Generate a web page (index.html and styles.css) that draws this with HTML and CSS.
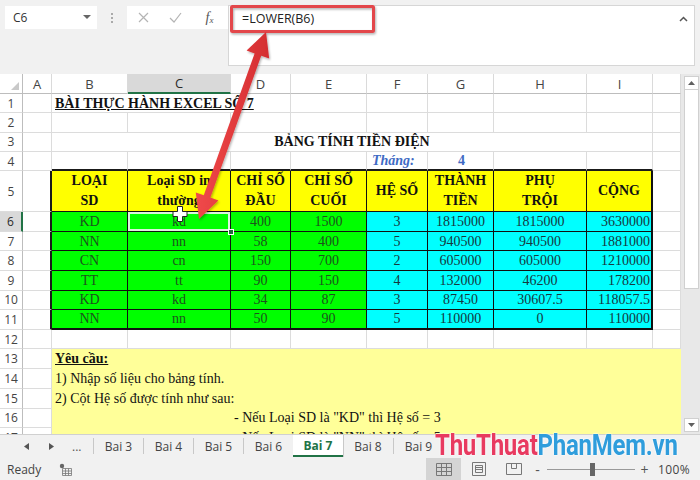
FILE: index.html
```html
<!DOCTYPE html>
<html lang="vi">
<head>
  <meta charset="UTF-8">
  <meta name="viewport" content="width=device-width, initial-scale=1.0">
  <title>Excel - LOWER</title>
  <link rel="stylesheet" href="styles.css">
</head>
<body>

<div class="excel">
  <!-- thanh công thức -->
  <div class="formula-area">
    <div class="name-box">
      <span>C6</span>
      <svg class="drop" width="8" height="5" viewBox="0 0 8 5"><path d="M0 0h8L4 4z" fill="#666"/></svg>
    </div>
    <div class="grip"><i></i><i></i><i></i></div>
    <div class="fx-buttons">
      <span class="fx-btn">
        <svg width="11" height="11" viewBox="0 0 11 11"><path d="M1 1l9 9M10 1l-9 9" stroke="#b4b4b4" stroke-width="1.2"/></svg>
      </span>
      <span class="fx-btn">
        <svg width="13" height="11" viewBox="0 0 13 11"><path d="M1 6l4 4 7-9" fill="none" stroke="#b4b4b4" stroke-width="1.2"/></svg>
      </span>
      <span class="fx-btn fx"><i>f</i><small>x</small></span>
    </div>
    <div class="formula-input">
      <span class="formula-text">=LOWER(B6)</span>
      <svg class="collapse" width="9" height="6" viewBox="0 0 9 6"><path d="M1 5l3.5-3.5L8 5" fill="none" stroke="#555" stroke-width="1.5"/></svg>
    </div>
  </div>

  <!-- vùng bảng tính -->
  <div class="sheet-area">
    <div class="grid-wrap">
      <table class="grid">
        <colgroup>
          <col style="width:23px"><col style="width:29px"><col style="width:76px"><col style="width:103px">
          <col style="width:60px"><col style="width:76px"><col style="width:61px"><col style="width:66px">
          <col style="width:93px"><col style="width:66px"><col style="width:28px">
        </colgroup>
        <thead>
          <tr>
            <th class="corner"><span class="tri"></span></th>
            <th>A</th><th>B</th><th class="on">C</th><th>D</th><th>E</th>
            <th>F</th><th>G</th><th>H</th><th>I</th><th></th>
          </tr>
        </thead>
        <tbody>
          <tr class="r">
            <td class="rh">1</td><td></td>
            <td colspan="3" class="title">BÀI THỰC HÀNH EXCEL SỐ 7</td>
            <td></td><td></td><td></td><td></td><td></td><td></td>
          </tr>
          <tr class="r">
            <td class="rh">2</td><td></td><td></td><td></td><td></td><td></td><td></td><td></td><td></td><td></td><td></td>
          </tr>
          <tr class="r">
            <td class="rh">3</td><td></td>
            <td colspan="8" class="title2">BẢNG TÍNH TIỀN ĐIỆN</td>
            <td></td>
          </tr>
          <tr class="r">
            <td class="rh">4</td><td></td>
            <td class="top"></td><td class="top"></td><td class="top"></td><td class="top"></td>
            <td class="top month">Tháng:</td><td class="top month num">4</td>
            <td class="top"></td><td class="top"></td><td></td>
          </tr>
          <tr class="r5">
            <td class="rh">5</td><td class="left"></td>
            <td class="hd">LOẠI<br>SD</td>
            <td class="hd">Loại SD in<br>thường</td>
            <td class="hd">CHỈ SỐ<br>ĐẦU</td>
            <td class="hd">CHỈ SỐ<br>CUỐI</td>
            <td class="hd">HỆ SỐ</td>
            <td class="hd">THÀNH<br>TIỀN</td>
            <td class="hd">PHỤ<br>TRỘI</td>
            <td class="hd end">CỘNG</td>
            <td></td>
          </tr>
          <tr class="d">
            <td class="rh on">6</td><td class="left"></td>
            <td class="g">KD</td><td class="g sel">kd<span class="handle"></span></td><td class="g">400</td><td class="g">1500</td>
            <td class="c">3</td><td class="c">1815000</td><td class="c">1815000</td><td class="c end">3630000</td><td></td>
          </tr>
          <tr class="d">
            <td class="rh">7</td><td class="left"></td>
            <td class="g">NN</td><td class="g">nn</td><td class="g">58</td><td class="g">400</td>
            <td class="c">5</td><td class="c">940500</td><td class="c">940500</td><td class="c end">1881000</td><td></td>
          </tr>
          <tr class="d">
            <td class="rh">8</td><td class="left"></td>
            <td class="g">CN</td><td class="g">cn</td><td class="g">150</td><td class="g">700</td>
            <td class="c">2</td><td class="c">605000</td><td class="c">605000</td><td class="c end">1210000</td><td></td>
          </tr>
          <tr class="d">
            <td class="rh">9</td><td class="left"></td>
            <td class="g">TT</td><td class="g">tt</td><td class="g">90</td><td class="g">150</td>
            <td class="c">4</td><td class="c">132000</td><td class="c">46200</td><td class="c end">178200</td><td></td>
          </tr>
          <tr class="d">
            <td class="rh">10</td><td class="left"></td>
            <td class="g">KD</td><td class="g">kd</td><td class="g">34</td><td class="g">87</td>
            <td class="c">3</td><td class="c">87450</td><td class="c">30607.5</td><td class="c end">118057.5</td><td></td>
          </tr>
          <tr class="d last">
            <td class="rh">11</td><td class="left"></td>
            <td class="g">NN</td><td class="g">nn</td><td class="g">50</td><td class="g">90</td>
            <td class="c">5</td><td class="c">110000</td><td class="c">0</td><td class="c end">110000</td><td></td>
          </tr>
          <tr class="n">
            <td class="rh">12</td><td></td><td></td><td></td><td></td><td></td><td></td><td></td><td></td><td></td><td></td>
          </tr>
          <tr class="n">
            <td class="rh">13</td><td></td>
            <td colspan="9" class="note"><b>Yêu cầu:</b></td>
          </tr>
          <tr class="n">
            <td class="rh">14</td><td></td>
            <td colspan="9" class="note">1) Nhập số liệu cho bảng tính.</td>
          </tr>
          <tr class="n">
            <td class="rh">15</td><td></td>
            <td colspan="9" class="note">2) Cột Hệ số được tính như sau:</td>
          </tr>
          <tr class="n">
            <td class="rh">16</td><td></td>
            <td class="note"></td><td class="note"></td>
            <td colspan="7" class="note">- Nếu Loại SD là "KD" thì Hệ số = 3</td>
          </tr>
          <tr class="n">
            <td class="rh">17</td><td></td>
            <td class="note"></td><td class="note"></td>
            <td colspan="7" class="note">- Nếu Loại SD là "NN" thì Hệ số = 5</td>
          </tr>
        </tbody>
      </table>
    </div>
    <div class="vscroll">
      <div class="sb-btn"><svg width="7" height="4" viewBox="0 0 7 4"><path d="M0 4L3.5 0 7 4z" fill="#606060"/></svg></div>
      <div class="sb-thumb"></div>
      <div class="sb-track"></div>
      <div class="sb-btn"><svg width="7" height="4" viewBox="0 0 7 4"><path d="M0 0h7L3.5 4z" fill="#606060"/></svg></div>
    </div>
  </div>

  <!-- thanh sheet -->
  <div class="tab-bar">
    <div class="tab-nav">
      <svg width="5" height="7" viewBox="0 0 5 7"><path d="M5 0v7L0 3.5z" fill="#555"/></svg>
      <svg width="5" height="7" viewBox="0 0 5 7"><path d="M0 0v7L5 3.5z" fill="#555"/></svg>
      <span class="more">...</span>
    </div>
    <div class="tab">Bai 3</div>
    <div class="tab">Bai 4</div>
    <div class="tab">Bai 5</div>
    <div class="tab">Bai 6</div>
    <div class="tab active">Bai 7</div>
    <div class="tab">Bai 8</div>
    <div class="tab">Bai 9</div>
  </div>

  <!-- thanh trạng thái -->
  <div class="status-bar">
    <span class="ready">Ready</span>
    <svg class="macro" width="13" height="13" viewBox="0 0 13 13">
      <circle cx="3" cy="3" r="2.2" fill="#666"/>
      <path d="M3.5 5.5h9v7h-9zM3.5 8h9M3.5 10.5h9M6.5 5.5v7M9.5 5.5v7" fill="none" stroke="#777" stroke-width="0.8"/>
    </svg>
    <div class="spacer"></div>
    <div class="view on">
      <svg width="16" height="13" viewBox="0 0 16 13"><path d="M0.5 0.5h15v12h-15zM0.5 4.5h15M0.5 8.5h15M5.5 0.5v12M10.5 0.5v12" fill="none" stroke="#777"/></svg>
    </div>
    <div class="view">
      <svg width="14" height="14" viewBox="0 0 14 14"><path d="M0.5 0.5h13v13h-13zM3.5 3.5h7v7h-7zM3.5 5.5h7M3.5 7.5h7" fill="none" stroke="#777"/></svg>
    </div>
    <div class="view">
      <svg width="16" height="12" viewBox="0 0 16 12"><path d="M0.5 0.5h15v11h-15zM5.5 0.5v5h5v-5" fill="none" stroke="#777"/></svg>
    </div>
    <div class="zoom">
      <span class="zm">-</span>
      <span class="slider"><i></i></span>
      <span class="zm">+</span>
      <span class="pct">100%</span>
    </div>
  </div>

  <!-- chú thích màu đỏ -->
  <svg class="annot" width="700" height="480" viewBox="0 0 700 480">
    <defs>
      <filter id="sh" x="-20%" y="-20%" width="140%" height="140%">
        <feDropShadow dx="1" dy="1.5" stdDeviation="1.2" flood-color="#000" flood-opacity="0.3"/>
      </filter>
      <linearGradient id="red" x1="0" y1="0" x2="1" y2="0">
        <stop offset="0" stop-color="#f0494a"/>
        <stop offset="1" stop-color="#d42e31"/>
      </linearGradient>
    </defs>
    <rect x="231.5" y="6.5" width="142" height="25" rx="1" fill="none" stroke="#e3474c" stroke-width="3" filter="url(#sh)"/>
    <polygon filter="url(#sh)" fill="url(#red)"
      points="266,32 269.2,58.6 261.2,55.8 210.4,197.6 218.4,200.4 199,219 195.8,192.4 203.8,195.2 254.6,53.4 246.6,50.6"/>
    <path d="M177.5 206.5h5v5h4.5v5h-4.5v5h-5v-5H173v-5h4.5z" fill="#fff" stroke="#222" stroke-width="1"/>
  </svg>

  <div class="watermark"><span class="wm-red">ThuThuat</span><span class="wm-blue">PhanMem.vn</span></div>
</div>

</body>
</html>
```

FILE: styles.css
```css
* {
  box-sizing: border-box;
}

body {
  margin: 0;
  background-color: #fff;
  font-family: "Open Sans", "Noto Sans", sans-serif;
}

.excel {
  position: relative;
  width: 700px;
  height: 480px;
  overflow: hidden;
  display: flex;
  flex-direction: column;
  background-color: #f1f1f1;
}

/* thanh công thức */
.formula-area {
  height: 74px;
  flex-shrink: 0;
  display: flex;
  align-items: flex-start;
  padding: 5px 5px 0 5px;
}

.name-box {
  margin-top: 1px;
  width: 92px;
  height: 23px;
  background-color: #fff;
  display: flex;
  align-items: center;
  justify-content: space-between;
  padding: 0 6px 0 8px;
  font-size: 12px;
  color: #333;
}

.grip {
  width: 30px;
  height: 23px;
  margin-top: 1px;
  display: flex;
  flex-direction: column;
  align-items: center;
  justify-content: center;
  gap: 2px;
}

.grip i {
  width: 2px;
  height: 2px;
  background-color: #aaa;
}

.fx-buttons {
  margin-top: 1px;
  width: 101px;
  height: 23px;
  background-color: #fff;
  display: flex;
  align-items: center;
}

.fx-btn {
  width: 32px;
  display: flex;
  justify-content: center;
  align-items: center;
}

.fx-btn.fx {
  width: 37px;
  font-family: "Liberation Serif", serif;
  color: #555;
  font-size: 14px;
}

.fx-btn.fx small {
  font-size: 9px;
  font-style: italic;
  margin-top: 4px;
}

.formula-input {
  width: 467px;
  height: 61px;
  background-color: #fff;
  border: 1px solid #d6d6d6;
  display: flex;
  justify-content: space-between;
  padding: 4px 6px 0 13px;
}

.formula-text {
  font-size: 12.5px;
  color: #222;
  line-height: 18px;
}

.collapse {
  margin-top: 6px;
}

/* lưới */
.sheet-area {
  height: 360px;
  flex-shrink: 0;
  display: flex;
}

.grid-wrap {
  width: 681px;
  height: 360px;
  overflow: hidden;
  background-color: #fff;
}

.grid {
  width: 681px;
  table-layout: fixed;
  border-collapse: separate;
  border-spacing: 0;
  font-family: "Liberation Serif", "Times New Roman", serif;
  font-size: 14px;
  color: #111;
}

.grid th {
  height: 17px;
  padding: 0;
  background-color: #fff;
  border-right: 1px solid #dadada;
  border-bottom: 1px solid #bdbdbd;
  font-family: "Open Sans", "Noto Sans", sans-serif;
  font-weight: normal;
  font-size: 13px;
  color: #444;
}

.grid th.on {
  background-color: #d9d9d9;
  border-bottom: 2px solid #217346;
  color: #2a2a2a;
}

.grid th.corner {
  position: relative;
  border-right-color: #bdbdbd;
}

.tri {
  position: absolute;
  right: 3px;
  bottom: 3px;
  width: 0;
  height: 0;
  border-left: 8px solid transparent;
  border-bottom: 8px solid #c9c9c9;
}

.grid td {
  padding: 0 3px;
  border-right: 1px solid #dcdcdc;
  border-bottom: 1px solid #dcdcdc;
  white-space: nowrap;
  overflow: hidden;
  vertical-align: middle;
  line-height: 17px;
}

.grid tr.r {
  height: 19.3px;
}

.grid tr.r5 {
  height: 40.2px;
}

.grid tr.d {
  height: 19.6px;
}

.grid tr.n {
  height: 19.7px;
}

.grid td.rh {
  padding: 0;
  text-align: center;
  background-color: #fff;
  border-right: 1px solid #bdbdbd;
  font-family: "Open Sans", "Noto Sans", sans-serif;
  font-size: 12px;
  color: #444;
}

.grid td.rh.on {
  background-color: #d9d9d9;
  border-right: 2px solid #217346;
  color: #2a2a2a;
}

.title {
  font-weight: bold;
  text-decoration: underline;
}

.title2 {
  font-weight: bold;
  text-align: center;
}

.grid td.top {
  border-bottom: 2px solid #1a1a1a;
}

.month {
  color: #3e6ac4;
  font-weight: bold;
  font-style: italic;
  padding-left: 5px !important;
}

.month.num {
  font-style: normal;
  text-align: center;
}

.grid td.left {
  border-right: 2px solid #1a1a1a;
}

/* bảng tiền điện */
.grid td.hd,
.grid td.g,
.grid td.c {
  border-right: 1px solid #111;
  border-bottom: 1px solid #111;
  text-align: center;
}

.grid td.hd {
  background-color: #ffff00;
  font-weight: bold;
  line-height: 20px;
  color: #111;
}

.grid td.g {
  background-color: #00ff00;
  color: #1d531d;
}

.grid td.c {
  background-color: #00ffff;
  color: #16383e;
}

.grid td.end {
  border-right: 2px solid #111;
}

.grid td.c.end {
  text-align: right;
  padding-right: 1px;
}

.grid tr.last td.g,
.grid tr.last td.c {
  border-bottom: 2px solid #111;
}

.grid td.sel {
  position: relative;
  box-shadow: inset 0 0 0 2px #dcf5dc;
  overflow: visible;
}

.handle {
  position: absolute;
  right: -4px;
  bottom: -4px;
  width: 6px;
  height: 6px;
  background-color: #1f6b3a;
  border: 1px solid #fff;
}

.grid td.note {
  background-color: #ffff99;
  border-right-color: #ffff99;
  border-bottom-color: #ffff99;
  overflow: visible;
}

.grid td.note b {
  text-decoration: underline;
}

/* thanh cuộn dọc */
.vscroll {
  width: 19px;
  height: 360px;
  padding: 2px 1px 2px 3px;
  display: flex;
  flex-direction: column;
  background-color: #e8e8e8;
}

.sb-btn {
  height: 14px;
  background-color: #fff;
  border: 1px solid #d0d0d0;
  display: flex;
  align-items: center;
  justify-content: center;
}

.sb-thumb {
  height: 199px;
  background-color: #fff;
  border: 1px solid #d0d0d0;
  border-top: none;
}

.sb-track {
  flex: 1;
}

/* thanh sheet */
.tab-bar {
  height: 24px;
  flex-shrink: 0;
  display: flex;
  align-items: stretch;
  border-top: 1px solid #d0d0d0;
  font-size: 12px;
  color: #444;
}

.tab-nav {
  width: 93px;
  display: flex;
  align-items: center;
  padding-left: 24px;
  gap: 20px;
}

.more {
  color: #555;
  margin-left: -2px;
}

.tab {
  width: 50px;
  display: flex;
  align-items: center;
  justify-content: center;
  border-left: 1px solid #c8c8c8;
  margin: 3px 0 4px;
}

.tab.active {
  margin: 0 0 1px;
  background-color: #fff;
  border-left: none;
  border-bottom: 2px solid #217346;
  color: #217346;
  font-weight: bold;
  box-shadow: 1px 0 0 #c8c8c8;
}

.tab.active + .tab {
  border-left: none;
}

/* thanh trạng thái */
.status-bar {
  height: 22px;
  flex-shrink: 0;
  display: flex;
  align-items: center;
  font-size: 12px;
  color: #444;
}

.ready {
  margin-left: 7px;
}

.macro {
  margin-left: 18px;
}

.spacer {
  flex: 1;
}

.view {
  width: 35px;
  height: 22px;
  display: flex;
  align-items: center;
  justify-content: center;
}

.view.on {
  background-color: #d4d4d4;
}

.zoom {
  display: flex;
  align-items: center;
  margin-left: 2px;
  margin-right: 5px;
}

.zm {
  width: 9px;
  text-align: center;
  font-size: 14px;
  color: #555;
}

.slider {
  position: relative;
  width: 88px;
  height: 1px;
  margin: 0 5px;
  background-color: #999;
}

.slider i {
  position: absolute;
  left: 43px;
  top: -6px;
  width: 5px;
  height: 13px;
  background-color: #666;
}

.pct {
  width: 37px;
  margin-left: 9px;
  letter-spacing: 0.4px;
}

/* lớp phủ */
.annot {
  position: absolute;
  left: 0;
  top: 0;
  pointer-events: none;
}

.watermark {
  position: absolute;
  left: 435px;
  top: 427px;
  font-family: "Roboto", "Liberation Sans", sans-serif;
  font-weight: bold;
  font-size: 30px;
  letter-spacing: -0.3px;
  transform: scaleX(0.8);
  transform-origin: left top;
  white-space: nowrap;
  text-shadow: 0 0 2px #fff, 0 0 2px #fff;
}

.wm-red {
  color: #e83a60;
}

.wm-blue {
  color: #2f9ddc;
}
```
